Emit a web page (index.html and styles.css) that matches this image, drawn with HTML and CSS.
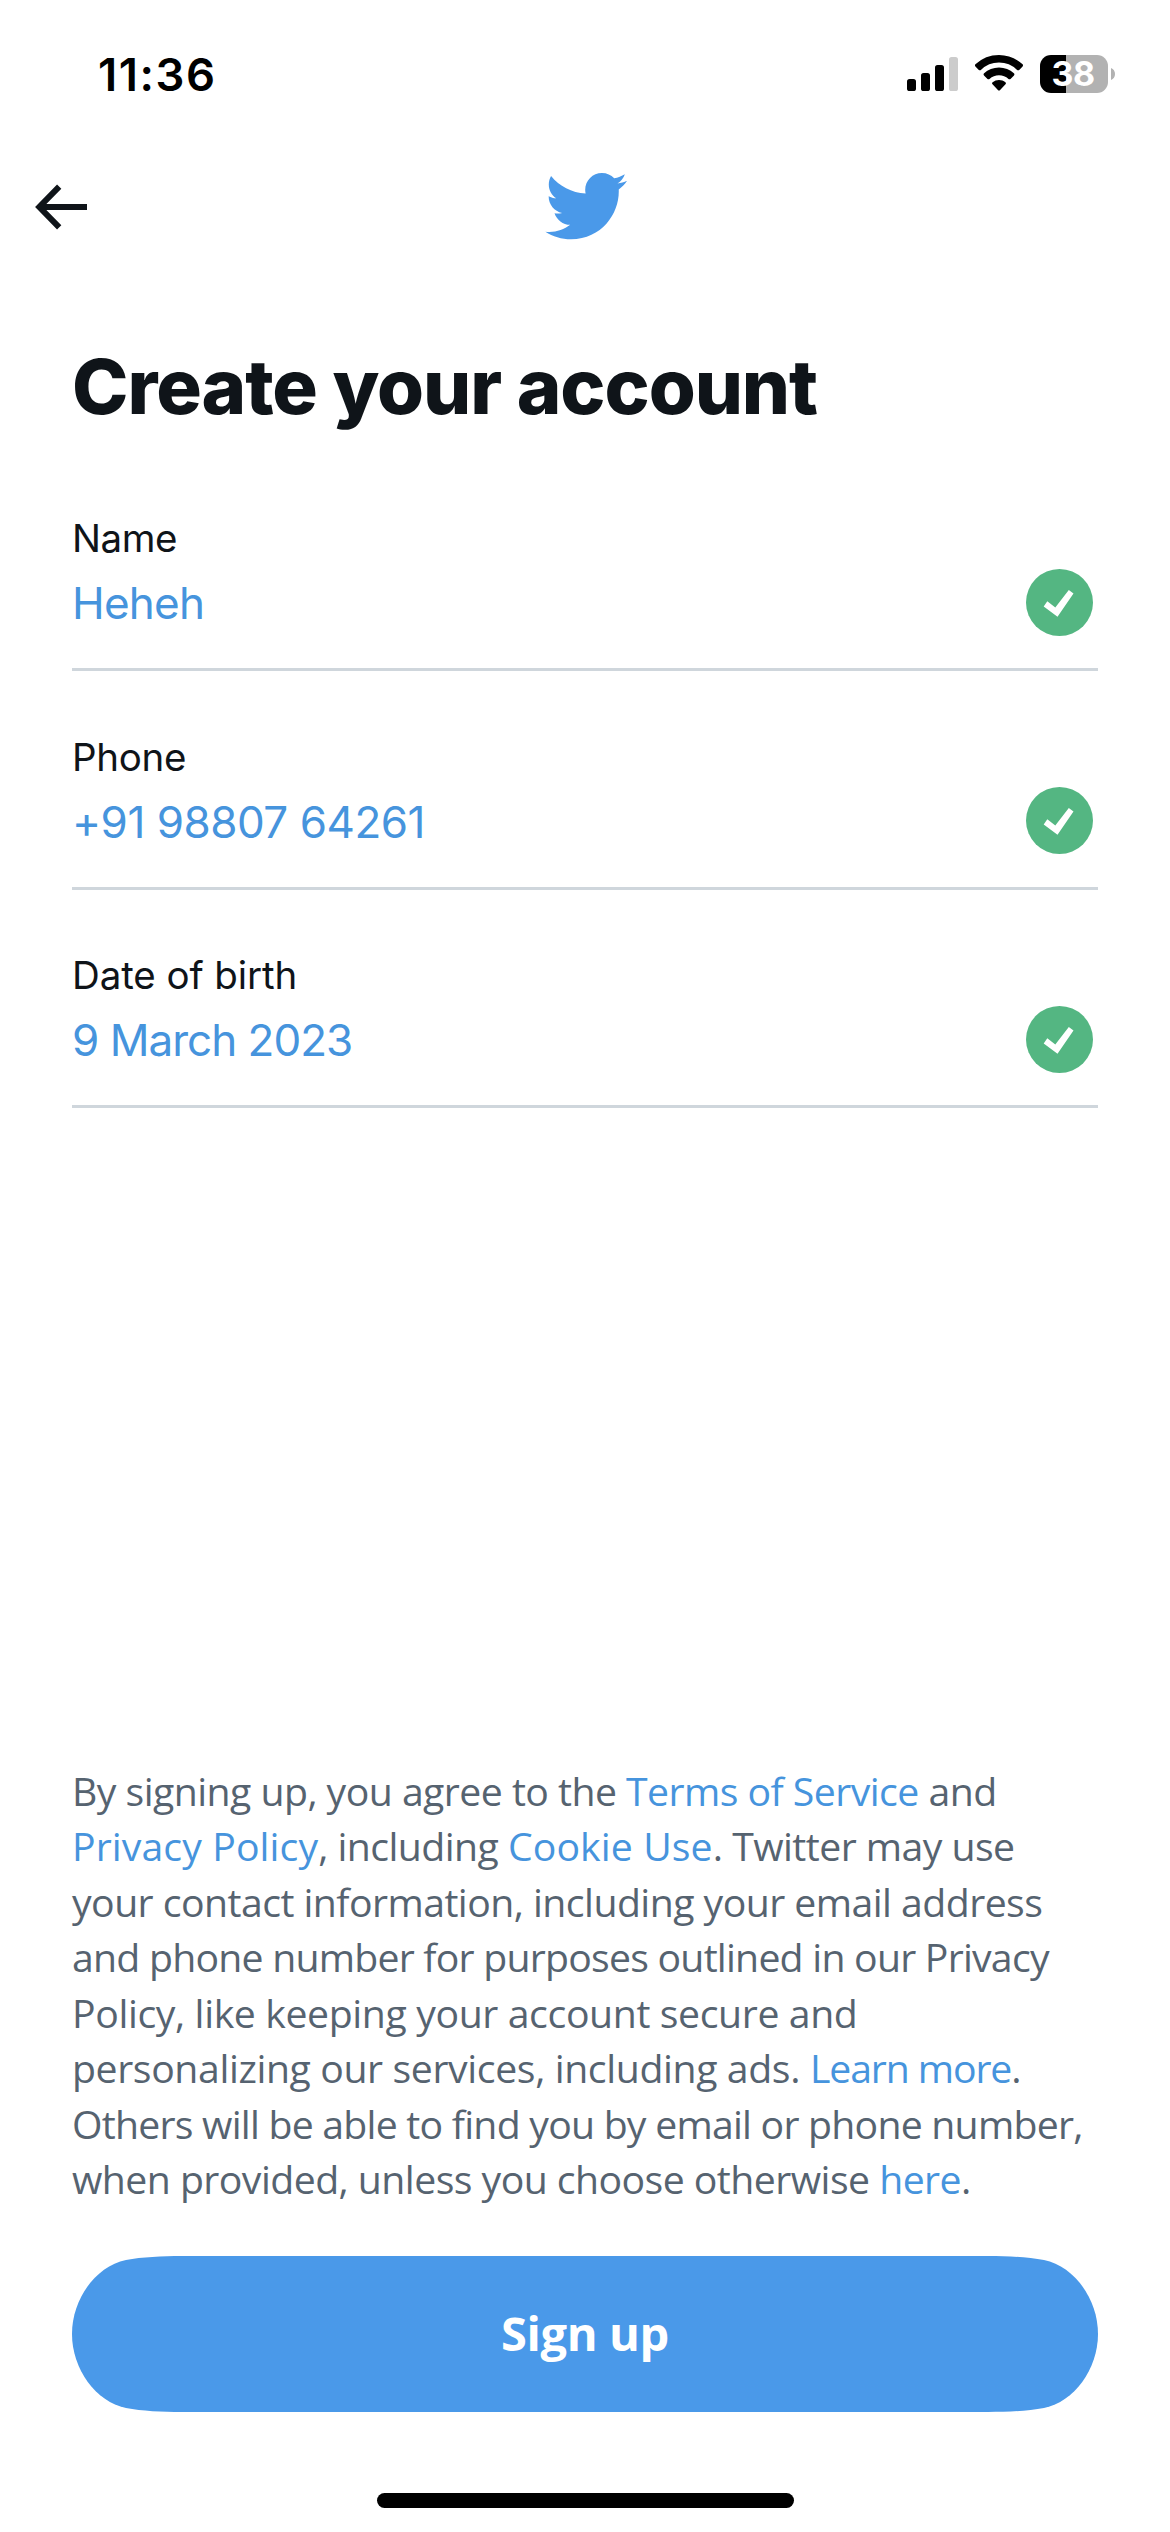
FILE: index.html
```html
<!DOCTYPE html>
<html lang="en">
<head>
<meta charset="utf-8">
<title>Create your account</title>
<link rel="stylesheet" href="styles.css">
</head>
<body>
<div class="screen">
  <header class="status">
    <time class="clock">11:36</time>
    <svg class="indicators" viewBox="0 0 210 40" aria-hidden="true">
      <rect x="0" y="25" width="9" height="12" rx="2.6"/>
      <rect x="14" y="19" width="9" height="18" rx="2.6"/>
      <rect x="28" y="11" width="9" height="26" rx="2.6"/>
      <rect x="42" y="3" width="9" height="34" rx="2.6" fill="#ccc"/>
      <path d="M92 1c9 0 17.300 3.500 23.600 9.300.6.600.6 1.500 0 2.100l-3.400 3.500c-.6.600-1.500.6-2.100 0A26.500 26.500 0 0 0 92 8.600a26.500 26.500 0 0 0-18.100 7.300c-.6.600-1.500.6-2.100 0l-3.400-3.500c-.6-.6-.6-1.500 0-2.100A34.700 34.700 0 0 1 92 1z"/>
      <path d="M92 13.500c5.700 0 10.900 2.200 14.900 5.800.7.600.7 1.500.1 2.100l-3.500 3.500c-.6.500-1.400.5-2 0a14.300 14.300 0 0 0-19 0c-.6.500-1.400.5-2 0L77 21.400c-.6-.6-.6-1.500.1-2.100 4-3.600 9.200-5.800 14.900-5.800z"/>
      <path d="M92 26c2.400 0 4.600.8 6.400 2.200.7.500.7 1.500.1 2.100l-5.400 5.700c-.6.700-1.600.7-2.200 0l-5.400-5.700c-.6-.6-.6-1.600.1-2.100A10.300 10.300 0 0 1 92 26z"/>
      <path fill="#b2b2b2" d="M159 1h31a11 11 0 0 1 11 11v16a11 11 0 0 1-11 11h-31z"/>
      <path d="M159 1v38h-15a11 11 0 0 1-11-11V12a11 11 0 0 1 11-11z"/>
      <path fill="#b2b2b2" d="M204 14c2.500.9 4 3.200 4 6s-1.500 5.100-4 6z"/>
      <text class="charge" x="144.500" y="32">38</text>
    </svg>
  </header>

  <nav class="topbar">
    <svg class="back" viewBox="0 0 56 48" aria-label="Back"><path d="M26.200 3.700 6.300 24l19.900 20.300M6.300 24H54"/></svg>
    <svg class="bird" viewBox="0 0 24 24" aria-label="Twitter"><path d="M23.643 4.937c-.835.37-1.732.62-2.675.733.962-.576 1.700-1.490 2.048-2.578-.9.534-1.897.922-2.958 1.130-.85-.904-2.060-1.470-3.400-1.470-2.572 0-4.658 2.086-4.658 4.660 0 .364.042.718.120 1.060-3.873-.195-7.304-2.050-9.602-4.868-.4.690-.63 1.490-.63 2.342 0 1.616.823 3.043 2.072 3.878-.764-.025-1.482-.234-2.110-.583v.06c0 2.257 1.605 4.140 3.737 4.568-.392.106-.803.162-1.227.162-.3 0-.593-.028-.877-.082.593 1.850 2.313 3.198 4.352 3.234-1.595 1.250-3.604 1.995-5.786 1.995-.376 0-.747-.022-1.112-.065 2.062 1.323 4.510 2.093 7.140 2.093 8.570 0 13.255-7.098 13.255-13.254 0-.2-.005-.402-.014-.602.910-.658 1.700-1.477 2.323-2.410z"/></svg>
  </nav>

  <main class="content">
    <h1 class="title">Create your account</h1>

    <section class="fields">
      <div class="field">
        <div><div class="label label-name">Name</div><div class="value value-name">Heheh</div></div>
        <svg class="check" viewBox="0 0 67 67"><circle cx="33.500" cy="33.500" r="33.500"/><path d="M17.700 37.500 21.300 32.200 29.300 38.500 42.800 21 47.500 24.500 31.500 47.800z"/></svg>
      </div>
      <div class="field">
        <div><div class="label">Phone</div><div class="value">+91 98807 64261</div></div>
        <svg class="check" viewBox="0 0 67 67"><circle cx="33.500" cy="33.500" r="33.500"/><path d="M17.700 37.500 21.300 32.200 29.300 38.500 42.800 21 47.500 24.500 31.500 47.800z"/></svg>
      </div>
      <div class="field">
        <div><div class="label label-date">Date of birth</div><div class="value value-date">9 March 2023</div></div>
        <svg class="check" viewBox="0 0 67 67"><circle cx="33.500" cy="33.500" r="33.500"/><path d="M17.700 37.500 21.300 32.200 29.300 38.500 42.800 21 47.500 24.500 31.500 47.800z"/></svg>
      </div>
    </section>

    <p class="terms">
      <span class="line">By signing up, you agree to the <a class="link">Terms of Service</a> and</span>
      <span class="line"><a class="link link-wide">Privacy Policy</a>, including <a class="link link-wide">Cookie Use</a>. Twitter may use</span>
      <span class="line">your contact information, including your email address</span>
      <span class="line line-tight">and phone number for purposes outlined in our Privacy</span>
      <span class="line line-loose">Policy, like keeping your account secure and</span>
      <span class="line line-loose">personalizing our services, including ads. <a class="link link-tight">Learn more</a>.</span>
      <span class="line line-tight">Others will be able to find you by email or phone number,</span>
      <span class="line">when provided, unless you choose otherwise <a class="link">here</a>.</span>
    </p>

    <button class="signup" type="button">Sign up</button>
  </main>

  <div class="home"></div>
</div>
</body>
</html>
```
FILE: styles.css
```css
* { box-sizing: border-box; }

body {
  margin: 0;
  background: #fff;
  color: #0f1419;
  font-family: Inter, "Liberation Sans", sans-serif;
}

.screen {
  display: flex;
  flex-direction: column;
  width: 1170px;
  height: 2532px;
  overflow: hidden;
}

/* Status bar */
.status {
  display: flex;
  justify-content: space-between;
  align-items: center;
  height: 148px;
  padding: 0 53px 0 98px;
  color: #000;
}

.clock {
  font-size: 45.4px;
  font-weight: 600;
  letter-spacing: 1.56px;
}

.indicators {
  width: 210px;
  height: 40px;
}

.charge {
  fill: #fff;
  font-size: 34px;
  font-weight: 700;
  letter-spacing: -.5px;
}

/* Navigation */
.topbar {
  display: grid;
  grid-template-columns: 1fr auto 1fr;
  align-items: center;
  height: 118px;
  padding-left: 33px;
  padding-right: 33px;
}

.back {
  width: 56px;
  height: 48px;
  fill: none;
  stroke: #0f1419;
  stroke-width: 6;
}

.bird {
  width: 86.4px;
  height: 86.4px;
  margin-bottom: 2px;
  fill: #4a99e9;
}

/* Form */
.content {
  display: flex;
  flex-direction: column;
  padding: 75.400px 72px 0;
}

.title {
  margin: 0;
  font-size: 76px;
  font-weight: 800;
  line-height: 90px;
  letter-spacing: -1.07px;
}

.fields {
  display: flex;
  flex-direction: column;
  gap: 61.500px;
  margin-top: 82.850px;
}

.field {
  display: flex;
  justify-content: space-between;
  height: 157px;
  padding-right: 5.500px;
  border-bottom: 3px solid #cfd6dc;
}

.label {
  font-size: 38.500px;
  line-height: 48px;
  letter-spacing: -.3px;
}

.label-name { letter-spacing: -.45px; }
.label-date { letter-spacing: -.1px; }

.value {
  margin-top: 14px;
  color: #4694dd;
  font-size: 44px;
  line-height: 54px;
  letter-spacing: -.49px;
}

.value-name { letter-spacing: -.75px; }
.value-date { letter-spacing: -.99px; }

.check {
  width: 67px;
  height: 67px;
  margin-top: 54.300px;
  fill: #54b682;
}

.check path { fill: #fff; }

/* Legal text */
.terms {
  margin: 654.750px 0 0;
  color: #566370;
  font-family: "Open Sans", "Liberation Sans", sans-serif;
  font-size: 39.2px;
  line-height: 55.5px;
  letter-spacing: -.54px;
}

.line {
  display: block;
  white-space: nowrap;
}

.line-tight { letter-spacing: -.76px; }
.line-loose { letter-spacing: -.38px; }

.link { color: #4694dd; }
.link-wide { letter-spacing: .1px; }
.link-tight { letter-spacing: -1.1px; }

.signup {
  height: 156px;
  margin: 49px 0 0;
  padding: 0 0 2px;
  border: 0;
  background: #4a99e9;
  clip-path: path("M0 78C0 43 24 10 54 4C70 1 90 0 110 0H916C936 0 956 1 972 4C1002 10 1026 43 1026 78C1026 113 1002 146 972 152C956 155 936 156 916 156H110C90 156 70 155 54 152C24 146 0 113 0 78Z");
  color: #fff;
  font-family: "Open Sans", "Liberation Sans", sans-serif;
  font-size: 47px;
  font-weight: 700;
  letter-spacing: -.38px;
}

.home {
  width: 417px;
  height: 15px;
  margin: auto auto 24px;
  border-radius: 8px;
  background: #000;
}
```
